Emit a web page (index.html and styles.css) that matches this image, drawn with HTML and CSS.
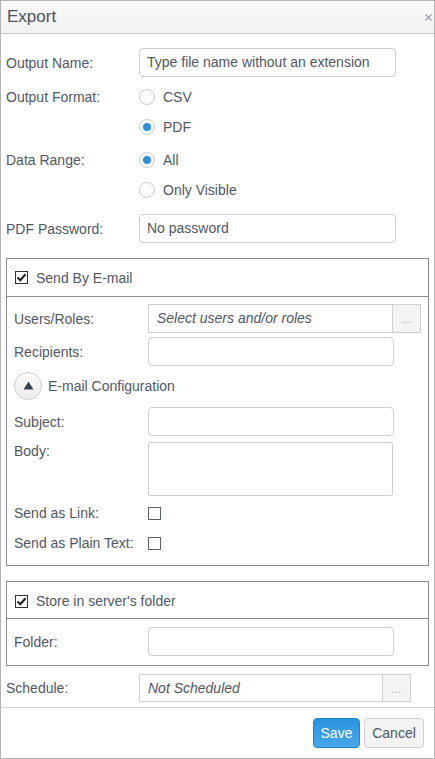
FILE: index.html
```html
<!DOCTYPE html>
<html>
<head>
<meta charset="utf-8">
<link rel="stylesheet" href="styles.css">
</head>
<body>
<div class="dialog">
  <div class="titlebar">
    <span class="title">Export</span>
    <svg class="close" width="7" height="7" viewBox="0 0 7 7"><path d="M0.5 0.5L6.5 6.5M6.5 0.5L0.5 6.5" stroke="#9a9ea6" stroke-width="1.1"/></svg>
  </div>
  <div class="content">
    <div class="row r-name">
      <div class="lbl">Output Name:</div>
      <div class="field w-out">Type file name without an extension</div>
    </div>
    <div class="row r-format">
      <div class="lbl lbl-top">Output Format:</div>
      <div class="options">
        <div class="opt"><span class="radio"></span>CSV</div>
        <div class="opt"><span class="radio on"></span>PDF</div>
      </div>
    </div>
    <div class="row r-range">
      <div class="lbl lbl-top">Data Range:</div>
      <div class="options">
        <div class="opt"><span class="radio on"></span>All</div>
        <div class="opt"><span class="radio"></span>Only Visible</div>
      </div>
    </div>
    <div class="row r-pass">
      <div class="lbl">PDF Password:</div>
      <div class="field w-out">No password</div>
    </div>

    <div class="fs fs-mail">
      <div class="fs-head"><span class="cb checked"><svg width="11" height="11" viewBox="0 0 11 11"><path d="M1.6 5.6L4.3 8.3L9.6 2.2" fill="none" stroke="#222" stroke-width="2.1"/></svg></span>Send By E-mail</div>
      <div class="fs-body">
        <div class="row r-users">
          <div class="lbl in">Users/Roles:</div>
          <div class="group g-users"><div class="field gf italic">Select users and/or roles</div><div class="dots">...</div></div>
        </div>
        <div class="row r-recip">
          <div class="lbl in">Recipients:</div>
          <div class="field w-in"></div>
        </div>
        <div class="row r-conf">
          <span class="circle"><svg width="11" height="9" viewBox="0 0 11 9"><path d="M5.5 0.5L10.5 8.5H0.5Z" fill="#36404f"/></svg></span>
          <span class="conf-text">E-mail Configuration</span>
        </div>
        <div class="row r-subj">
          <div class="lbl in">Subject:</div>
          <div class="field w-in"></div>
        </div>
        <div class="row r-body">
          <div class="lbl in lbl-body">Body:</div>
          <div class="textarea"></div>
        </div>
        <div class="row r-link">
          <div class="lbl in">Send as Link:</div>
          <span class="cb"></span>
        </div>
        <div class="row r-plain">
          <div class="lbl in">Send as Plain Text:</div>
          <span class="cb"></span>
        </div>
      </div>
    </div>

    <div class="fs fs-store">
      <div class="fs-head short"><span class="cb checked"><svg width="11" height="11" viewBox="0 0 11 11"><path d="M1.6 5.6L4.3 8.3L9.6 2.2" fill="none" stroke="#222" stroke-width="2.1"/></svg></span>Store in server's folder</div>
      <div class="fs-body store-body">
        <div class="row r-folder">
          <div class="lbl in">Folder:</div>
          <div class="field w-in"></div>
        </div>
      </div>
    </div>

    <div class="row r-sched">
      <div class="lbl">Schedule:</div>
      <div class="group g-sched"><div class="field gf italic">Not Scheduled</div><div class="dots">...</div></div>
    </div>
  </div>
  <div class="footer">
    <button class="btn save">Save</button>
    <button class="btn cancel">Cancel</button>
  </div>
</div>
</body>
</html>
```

FILE: styles.css
```css
* { box-sizing: border-box; }
html, body { margin: 0; padding: 0; background: #fff; }
body {
  font-family: "Liberation Sans", Arial, sans-serif;
  font-size: 14px;
  color: #515764;
}
.dialog {
  width: 435px;
  height: 759px;
  border: 1px solid #b4b4b4;
  display: flex;
  flex-direction: column;
}
.titlebar {
  height: 33px;
  border-bottom: 1px solid #c8c8c8;
  background: linear-gradient(#fafafa, #f1f1f1);
  display: flex;
  align-items: center;
  justify-content: space-between;
  padding: 0 2px 0 6px;
}
.title { font-size: 17px; color: #4a5160; }
.close { margin-top: 1px; }
.content { padding: 14px 5px 0 5px; }
.row { display: flex; align-items: center; }
.lbl { width: 133px; flex: none; line-height: 16px; }
.lbl.in { width: 134px; }
.lbl-top { align-self: flex-start; line-height: 30px; }
.field {
  height: 29px;
  border: 1px solid #cfcfcf;
  border-radius: 4px;
  padding: 0 7px;
  line-height: 27px;
  background: #fff;
  white-space: nowrap;
  overflow: hidden;
}
.w-out { width: 257px; }
.w-in { width: 246px; }
.italic { font-style: italic; padding-left: 8px; }
.r-format { margin-top: 5px; }
.r-range { margin-top: 3px; }
.r-pass { margin-top: 9px; }
.options { display: flex; flex-direction: column; }
.opt { height: 30px; display: flex; align-items: center; }
.radio {
  width: 16px; height: 16px;
  border: 1px solid #cdcdcd;
  border-radius: 50%;
  margin-right: 8px;
  background: #fff;
  position: relative;
}
.radio.on::after {
  content: "";
  position: absolute;
  left: 3px; top: 3px;
  width: 8px; height: 8px;
  border-radius: 50%;
  background: #2d8fdc;
}
.fs { border: 1px solid #8e8e8e; margin-top: 15px; }
.fs-head {
  height: 38px;
  border-bottom: 1px solid #8e8e8e;
  display: flex;
  align-items: center;
  padding-left: 8px;
}
.fs-head.short { height: 37px; padding-top: 2px; }
.cb {
  width: 13px; height: 13px;
  border: 1px solid #5a5f68;
  background: #fff;
  display: inline-flex;
  align-items: center;
  justify-content: center;
  flex: none;
}
.fs-head .cb { margin-right: 8px; border-color: #333; }
.fs-body { padding: 7px 7px 7px 7px; }
.store-body { padding: 8px 7px 9px 7px; }
.group { display: flex; height: 29px; }
.g-users { width: 273px; }
.g-sched { width: 272px; height: 28px; }
.g-sched .field { height: 28px; line-height: 26px; }
.gf { flex: 1; border-radius: 0; }
.dots {
  width: 28px;
  flex: none;
  border: 1px solid #cfcfcf;
  border-left: none;
  background: #f3f3f3;
  color: #9a9a9a;
  font-size: 10px;
  text-align: center;
  line-height: 30px;
  letter-spacing: 0.5px;
}
.r-recip { margin-top: 4px; }
.r-conf { margin-top: 6px; }
.circle {
  width: 28px; height: 28px;
  border: 1px solid #d0d0d0;
  border-radius: 50%;
  background: linear-gradient(#fbfbfb, #ececec);
  display: inline-flex;
  align-items: center;
  justify-content: center;
  margin-right: 6px;
  padding-bottom: 1px;
}
.r-subj { margin-top: 7px; }
.r-body { margin-top: 6px; align-items: flex-start; }
.lbl-body { padding-top: 0; line-height: 16px; margin-top: 1px; }
.textarea { width: 245px; height: 54px; border: 1px solid #cfcfcf; border-radius: 2px; }
.r-link { margin-top: 2px; height: 30px; }
.r-plain { height: 30px; }
.r-sched { margin-top: 8px; }
.footer {
  margin-top: auto;
  height: 51px;
  border-top: 1px solid #d0d0d0;
  display: flex;
  justify-content: flex-end;
  align-items: flex-start;
  padding: 10px 10px 0 0;
  gap: 4px;
}
.btn {
  height: 30px;
  font-family: "Liberation Sans", Arial, sans-serif;
  font-size: 14px;
  border-radius: 4px;
  padding: 0;
}
.save {
  width: 47px;
  color: #fff;
  background: linear-gradient(#2a93df, #48a8e8);
  border: 1px solid #2381c6;
}
.cancel {
  width: 60px;
  color: #4f5562;
  background: #f3f3f3;
  border: 1px solid #cfcfcf;
}
```
